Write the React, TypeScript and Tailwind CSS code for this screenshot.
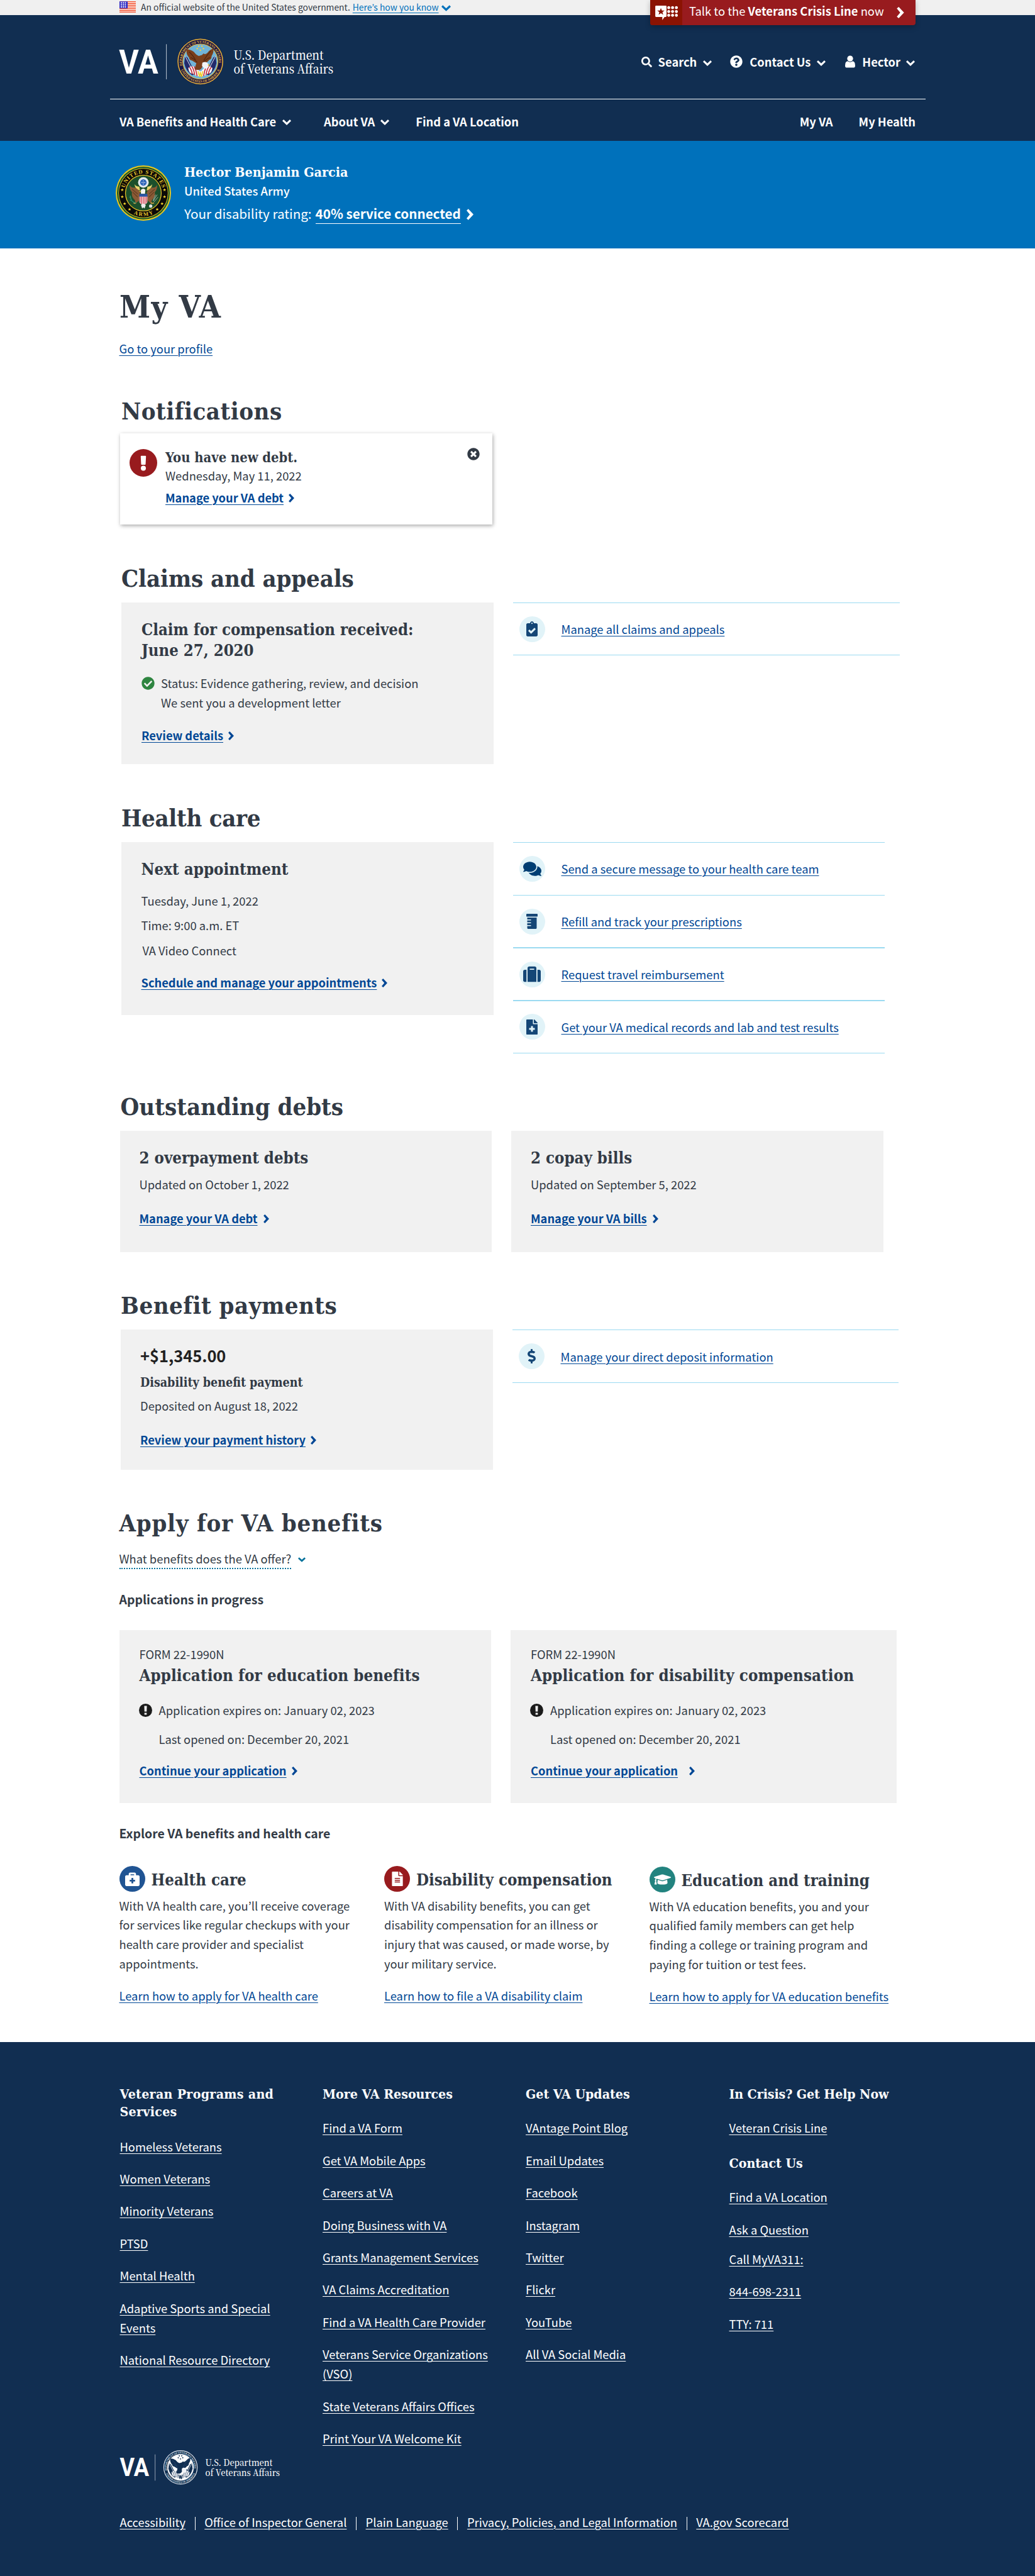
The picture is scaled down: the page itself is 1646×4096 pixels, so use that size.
import type { ReactNode } from "react";
import {
  FaBriefcaseMedical,
  FaCheckCircle,
  FaClipboardCheck,
  FaComments,
  FaDollarSign,
  FaFileAlt,
  FaFileMedical,
  FaGraduationCap,
  FaPrescriptionBottle,
  FaQuestionCircle,
  FaSearch,
  FaSuitcase,
  FaTimesCircle,
} from "react-icons/fa";

const SERIF = "font-['DejaVu_Serif_Condensed','DejaVu_Serif',serif] font-bold";
const LINK = "underline decoration-1 underline-offset-[3px]";

function ChevronRight({ className }: { className?: string }) {
  return (
    <svg viewBox="0 0 14 22" className={className} fill="currentColor" aria-hidden="true">
      <polygon points="3.6,0 14,11 3.6,22 0,18.8 6.6,11 0,3.2" />
    </svg>
  );
}

function ChevronDown({ className }: { className?: string }) {
  return (
    <svg viewBox="0 0 22 14" className={className} fill="currentColor" aria-hidden="true">
      <polygon points="0,3.6 11,14 22,3.6 18.8,0 11,7.2 3.2,0" />
    </svg>
  );
}

function Flag() {
  return (
    <svg viewBox="0 0 40 27" className="h-[18px] w-[26px]" aria-hidden="true">
      <rect width="40" height="27" fill="#fff" />
      {[0, 4.2, 8.4, 12.6, 16.8, 21, 25].map((y) => (
        <rect key={y} y={y} width="40" height="2" fill="#f0350c" />
      ))}
      <rect width="20" height="17" fill="#2f2bc4" />
      {[3, 8, 13].map((y) =>
        [3, 8, 13].map((x) => <rect key={`${x}-${y}`} x={x} y={y - 1} width="3" height="3" fill="#fff" />),
      )}
    </svg>
  );
}

function VaSeal({ mono = false }: { mono?: boolean }) {
  const ring = mono ? "#112e51" : "#1b1746";
  const gold = mono ? "#dfe5ec" : "#e3b43a";
  const sky = mono ? "#ffffff" : "#71b4d8";
  const wing = mono ? "#112e51" : "#7a3f1c";
  const wingDark = mono ? "#27456b" : "#4d2411";
  const canton = mono ? "#112e51" : "#232a6b";
  const red = mono ? "#6f829b" : "#c8202f";
  const id = mono ? "mono" : "color";
  return (
    <g>
      <circle cx="58" cy="60" r="57.5" fill={ring} />
      <circle cx="58" cy="60" r="55.5" fill="none" stroke={gold} strokeWidth="2.4" />
      <circle cx="58" cy="60" r="43.5" fill={sky} stroke={gold} strokeWidth="1.8" />
      <path id={`seal-top-${id}`} d="M 14.2 73 A 45.8 45.8 0 1 1 101.8 73" fill="none" />
      <path id={`seal-bottom-${id}`} d="M 7.5 74 A 52.5 52.5 0 0 0 108.5 74" fill="none" />
      <g fill={gold} fontSize="8.6" fontWeight="700" fontFamily="'Liberation Serif', serif">
        <text>
          <textPath href={`#seal-top-${id}`} startOffset="3" textLength="158" lengthAdjust="spacing">
            DEPARTMENT OF VETERANS AFFAIRS
          </textPath>
        </text>
        <text>
          <textPath href={`#seal-bottom-${id}`} startOffset="7" textLength="122" lengthAdjust="spacing">
            UNITED STATES OF AMERICA
          </textPath>
        </text>
      </g>
      <g fill={mono ? "#112e51" : "#f3cf46"}>
        <circle cx="54" cy="22" r="2" />
        <circle cx="62" cy="22" r="2" />
        <circle cx="50.5" cy="28" r="2" />
        <circle cx="65.5" cy="28" r="2" />
        <circle cx="58" cy="32" r="2" />
      </g>
      <path d="M20 46 L26 50 L46 90 L38 94 Q22 84 18 64 Z" fill={canton} />
      <path d="M96 46 L90 50 L70 90 L78 94 Q94 84 98 64 Z" fill={canton} />
      <path d="M20 46 L44 92" stroke={mono ? "#fff" : "#dfe6ee"} strokeWidth="1.6" />
      <path d="M96 46 L72 92" stroke={mono ? "#fff" : "#dfe6ee"} strokeWidth="1.6" />
      <path d="M28 76 Q40 64 56 84 L60 84 Q76 64 88 76 Q86 92 76 90 Q68 98 58 96 Q48 98 40 90 Q30 92 28 76 Z" fill="#f4f4f6" />
      <g stroke={red} strokeWidth="2.4" fill="none">
        <path d="M31 74 Q36 80 38 91" />
        <path d="M37 72 Q42 80 44 93" />
        <path d="M43 72 Q48 82 50 96" />
        <path d="M85 74 Q80 80 78 91" />
        <path d="M79 72 Q74 80 72 93" />
        <path d="M73 72 Q68 82 66 96" />
      </g>
      <path
        d="M24 30 Q22 42 30 50 Q30 56 38 58 Q44 62 48 64 L44 78 Q52 84 60 78 L68 64 Q76 62 80 56 Q86 54 86 46 Q92 38 90 28 Q82 30 76 38 Q70 44 66 40 L62 44 L54 46 Q48 44 42 36 Q34 30 24 30 Z"
        fill={wing}
      />
      <path d="M30 36 Q38 42 46 56 M34 50 Q42 52 50 62 M84 34 Q74 44 66 58 M82 50 Q74 52 64 64" stroke={wingDark} strokeWidth="1.8" fill="none" />
      <path d="M63 63 Q72 58 78 66 Q80 76 72 78 Q64 76 62 70 Z" fill="#f2f4f8" />
      <path d="M77 66 L82 69 L77 71 Z" fill={mono ? "#112e51" : "#f0b929"} />
      <path d="M52 84 L56 98 L58 86 L61 99 L64 84" stroke={mono ? "#112e51" : "#f3cf2e"} strokeWidth="2.6" fill="none" />
    </g>
  );
}

/** Wordmark, seal and department name; drawn on a 530 x 120 grid. */
function VaLogo({ mono = false, className }: { mono?: boolean; className?: string }) {
  return (
    <svg viewBox="0 0 530 120" className={`overflow-visible ${className}`} role="img" aria-label="U.S. Department of Veterans Affairs">
      <text x="-1" y="88.5" fill="#fff" fontFamily="Roboto, 'Liberation Sans', sans-serif" fontWeight="700" fontSize="83" textLength="97" lengthAdjust="spacingAndGlyphs">
        VA
      </text>
      <rect x="115.5" y="16" width="1.6" height="87" fill="#b9c3cf" />
      <g transform="translate(142.5 -1)">
        <VaSeal mono={mono} />
      </g>
      <g fill="#fff" fontFamily="'Noto Serif CJK SC', 'Liberation Serif', serif" fontWeight="500" fontSize="31">
        <text x="283" y="55" textLength="223" lengthAdjust="spacingAndGlyphs">
          U.S. Department
        </text>
        <text x="283" y="88.5" textLength="247" lengthAdjust="spacingAndGlyphs">
          of Veterans Affairs
        </text>
      </g>
    </svg>
  );
}

const STAR = "0,-4 1.1,-1.3 4,-1.2 1.7,0.5 2.5,3.3 0,1.7 -2.5,3.3 -1.7,0.5 -4,-1.2 -1.1,-1.3";

function ArmySeal() {
  return (
    <svg viewBox="0 0 136 136" className="h-[88px] w-[88px]" role="img" aria-label="United States Army seal">
      <circle cx="68" cy="68" r="68" fill="#e9c81f" />
      <circle cx="68" cy="68" r="65" fill="#1d5a2c" />
      <circle cx="68" cy="68" r="61.5" fill="#d8b91f" />
      <circle cx="68" cy="68" r="60" fill="#0b0a08" />
      <circle cx="68" cy="68" r="45" fill="#e2bd28" />
      <circle cx="68" cy="68" r="43" fill="#1c4f2b" />
      <path id="army-top" d="M 22.5 68 A 45.5 45.5 0 0 1 113.5 68" fill="none" />
      <path id="army-bottom" d="M 11.5 68 A 56.5 56.5 0 0 0 124.5 68" fill="none" />
      <g fill="#e6c32a" fontFamily="'Liberation Serif', serif" fontWeight="700" fontSize="13.5">
        <text dy="-2.5">
          <textPath href="#army-top" startOffset="12" textLength="119" lengthAdjust="spacing">
            UNITED STATES
          </textPath>
        </text>
        <text>
          <textPath href="#army-bottom" startOffset="64" textLength="50" lengthAdjust="spacing">
            ARMY
          </textPath>
        </text>
      </g>
      <g fill="#f1cf2b">
        {[
          [16, 60],
          [16, 77],
          [22, 94],
          [34, 108],
          [120, 60],
          [120, 77],
          [114, 94],
          [102, 108],
        ].map(([x, y]) => (
          <polygon key={`${x}-${y}`} points={STAR} transform={`translate(${x} ${y})`} />
        ))}
      </g>
      <path d="M46 46 Q48 60 60 62 L58 52 Q50 52 46 46 Z M90 46 Q88 60 76 62 L78 52 Q86 52 90 46 Z" fill="#e8d36a" />
      <path d="M34 48 Q38 56 46 54 Q56 58 60 66 L58 86 L46 96 Q50 88 46 84 Q38 76 40 66 Q34 60 34 48 Z" fill="#8a5a35" />
      <path d="M102 48 Q98 56 90 54 Q80 58 76 66 L78 86 L90 96 Q86 88 90 84 Q98 76 96 66 Q102 60 102 48 Z" fill="#8a5a35" />
      <path d="M40 58 L54 70 M42 66 L54 78 M96 58 L82 70 M94 66 L82 78" stroke="#5e3a1f" strokeWidth="1.6" />
      <circle cx="68" cy="42" r="13" fill="#f3f4f6" />
      <circle cx="68" cy="42" r="8" fill="#2b62b8" />
      <circle cx="68" cy="42" r="10.4" fill="none" stroke="#b9c6da" strokeWidth="1" />
      <g fill="#fff">
        <circle cx="68" cy="38" r="1.1" />
        <circle cx="64.5" cy="42" r="1.1" />
        <circle cx="68" cy="42" r="1.1" />
        <circle cx="71.5" cy="42" r="1.1" />
        <circle cx="68" cy="46" r="1.1" />
      </g>
      <path d="M62 60 Q68 54 73 60 L72 70 L62 70 Z" fill="#f6f6f2" />
      <path d="M61 62 L57 64 L62 66 Z" fill="#eec22c" />
      <rect x="58" y="70" width="20" height="8" fill="#2a55a5" />
      <path d="M58 77 H78 V90 Q76 95 68 97 Q60 95 58 90 Z" fill="#f5f3f3" />
      <path d="M60 77 V92 M64 77 V95 M68 77 V97 M72 77 V95 M76 77 V92" stroke="#cf2336" strokeWidth="1.8" />
      <path d="M50 92 Q46 94 44 92 M86 92 Q92 94 94 92" stroke="#d9b04a" strokeWidth="2.4" />
      <path d="M62 97 L68 94 L74 97 L71 106 L68 103 L65 106 Z" fill="#eceeee" />
      <path d="M36 74 Q36 90 50 92 M38 80 l-4 -2 M40 86 l-5 0" stroke="#2f8a6a" strokeWidth="2.2" fill="none" />
      <path d="M102 72 L92 88 M98 72 L92 86 M104 78 L94 90" stroke="#c2ccc9" strokeWidth="1.2" />
      <circle cx="86" cy="100" r="4" fill="#dfe3e4" />
    </svg>
  );
}

function CrisisIcon() {
  return (
    <svg viewBox="0 0 56 36" className="h-[23px] w-[36px]" aria-hidden="true">
      <path d="M2 0 H26 Q28 0 28 2 V26 Q28 28 26 28 H23 L17.5 36 V28 H2 Q0 28 0 26 V2 Q0 0 2 0 Z" fill="#fff" />
      <polygon points={STAR} transform="translate(14 15) scale(2.3)" fill="#8b1303" />
      {[5, 14.5, 24].map((y) =>
        [33.5, 43, 52.5].map((x) => <circle key={`${x}-${y}`} cx={x} cy={y} r="3.7" fill="#fff" />),
      )}
    </svg>
  );
}

function PersonIcon() {
  return (
    <svg viewBox="0 0 25 30" className="h-[20px] w-[16px]" fill="#fff" aria-hidden="true">
      <ellipse cx="12.5" cy="7.4" rx="7.2" ry="7.4" />
      <path d="M6 14 Q12.5 18.5 19 14 Q25 15 25 25 Q25 30 20 30 H5 Q0 30 0 25 Q0 15 6 14 Z" />
    </svg>
  );
}

function AlertIcon() {
  return (
    <svg viewBox="0 0 68 68" className="h-[44px] w-[44px] shrink-0" aria-hidden="true">
      <circle cx="34" cy="34" r="34" fill="#981b1e" />
      <path d="M27.5 18 Q27.5 16.5 29 16.5 H39 Q40.5 16.5 40.5 18 L39.5 37 Q39.5 38.5 38 38.5 H30 Q28.5 38.5 28.5 37 Z" fill="#fff" />
      <circle cx="34" cy="47" r="6.2" fill="#fff" />
    </svg>
  );
}

function ExpiresIcon() {
  return (
    <svg viewBox="0 0 32 32" className="mt-[6px] h-[21px] w-[21px] shrink-0" aria-hidden="true">
      <circle cx="16" cy="16" r="16" fill="#1b1b1b" />
      <path d="M12.8 5.5 H19.2 L18.7 19 H13.3 Z M13.2 22 H18.8 V26.5 H13.2 Z" fill="#f1f1f1" />
    </svg>
  );
}

function ActionLink({ children, gap = "gap-[8px]" }: { children: ReactNode; gap?: string }) {
  return (
    <a className={`flex items-center ${gap} text-[18.3px] leading-[32px] font-bold text-[#004795]`}>
      <span className={LINK}>{children}</span>
      <ChevronRight className="mt-[2px] h-[14px] w-[9px]" />
    </a>
  );
}

function TopBanner() {
  return (
    <div className="flex h-[24px] bg-[#f0f0f0] pl-[190px] text-[13.87px] leading-[22px]">
      <div className="pt-[2px]">
        <Flag />
      </div>
      <span className="ml-[8px]">An official website of the United States government.</span>
      <a className={`${LINK} ml-[4px] text-[#0071bb]`}>Here’s how you know</a>
      <ChevronDown className="mt-[8px] ml-[4px] h-[10px] w-[15px] text-[#0071bb]" />
    </div>
  );
}

function CrisisLine() {
  return (
    <div className="absolute top-0 left-[1034px] flex h-[40px] w-[422px] overflow-hidden rounded-b-[4px] bg-[#981b1e] text-[18.36px] leading-[32px] text-white shadow-[0_3px_8px_rgba(0,0,0,0.25)]">
      <div className="flex w-[51px] justify-center bg-[#8b1303] pt-[9px]">
        <CrisisIcon />
      </div>
      <span className="mt-px ml-[11px] whitespace-pre">
        Talk to the <b>Veterans Crisis Line</b> now
      </span>
      <ChevronRight className="mt-[11px] mr-[18px] ml-auto h-[18px] w-[12px]" />
    </div>
  );
}

function Header() {
  return (
    <header className="h-[200px] bg-[#112e51] text-[18.3px] leading-[32px] font-bold text-white">
      <div className="ml-[175px] w-[1297px] px-[15px]">
        <div className="flex h-[133px] justify-between">
          <VaLogo className="mt-[36px] h-[77px] w-[340px]" />
          <div className="mt-[58px] flex h-[32px] items-center">
            <FaSearch className="h-[17px] w-[17px]" />
            <span className="ml-[10px]">Search</span>
            <ChevronDown className="mt-[4px] ml-[10px] h-[9px] w-[14px]" />
            <FaQuestionCircle className="ml-[29px] h-[20px] w-[20px]" />
            <span className="ml-[11px]">Contact Us</span>
            <ChevronDown className="mt-[4px] ml-[10px] h-[9px] w-[14px]" />
            <span className="ml-[31px]">
              <PersonIcon />
            </span>
            <span className="ml-[11px]">Hector</span>
            <ChevronDown className="mt-[4px] mr-[2px] ml-[9px] h-[9px] w-[14px]" />
          </div>
        </div>
        <div className="-mx-[15px] h-px bg-white" />
        <nav className="mt-[19px] flex items-center">
          <span>VA Benefits and Health Care</span>
          <ChevronDown className="mt-[3px] ml-[10px] h-[9px] w-[14px]" />
          <span className="ml-[52px]">About VA</span>
          <ChevronDown className="mt-[3px] ml-[9px] h-[9px] w-[14px]" />
          <span className="ml-[42px]">Find a VA Location</span>
          <span className="ml-auto">My VA</span>
          <span className="mr-px ml-[41px]">My Health</span>
        </nav>
      </div>
    </header>
  );
}

function Profile() {
  return (
    <section className="flex h-[171px] bg-[#0071bb] pl-[184px] text-white">
      <div className="mt-[39px]">
        <ArmySeal />
      </div>
      <div className="mt-[36px] ml-[21px]">
        <div className={`${SERIF} text-[21.3px] leading-[28px]`}>Hector Benjamin Garcia</div>
        <div className="text-[18.4px] leading-[30px] font-medium">United States Army</div>
        <div className="mt-[6px] flex items-start text-[20.63px] leading-[31px]">
          <span>Your disability rating:</span>
          <b className="ml-[6px] border-b-[1.5px] border-white">40% service connected</b>
          <ChevronRight className="mt-[8px] ml-[9px] h-[18px] w-[11px]" />
        </div>
      </div>
    </section>
  );
}

function QuickLinks({ className, rowHeight = "h-[83.4px]", items }: {
  className: string;
  rowHeight?: string;
  items: { icon: ReactNode; label: string }[];
}) {
  return (
    <ul className={`${className} border-b border-[#9bdaf1] [&>li:nth-child(n+3)]:border-t-2`}>
      {items.map(({ icon, label }) => (
        <li key={label} className={`${rowHeight} flex items-center border-t border-[#9bdaf1] pl-[10px]`}>
          <span className="flex h-[41px] w-[41px] items-center justify-center rounded-full bg-[#e1f3f8] text-[#144676]">
            {icon}
          </span>
          <a className={`${LINK} ml-[26px] text-[18.38px] leading-[32px] text-[#004795]`}>{label}</a>
        </li>
      ))}
    </ul>
  );
}

function Notifications() {
  return (
    <section className="ml-[191px]">
      <h2 className={`${SERIF} mt-[60px] ml-[2px] text-[38px] leading-[48px] tracking-[0.5px]`}>Notifications</h2>
      <div className="mt-[11px] flex h-[145px] w-[592px] bg-white pt-[25px] pr-[20px] pl-[15px] shadow-[1px_2px_6px_rgba(0,0,0,0.35)]">
        <AlertIcon />
        <div className="ml-[13px] grow">
          <h3 className={`${SERIF} text-[21.8px] leading-[28px]`}>You have new debt.</h3>
          <p className="leading-[28px]">Wednesday, May 11, 2022</p>
          <div className="mt-[5px]">
            <ActionLink>Manage your VA debt</ActionLink>
          </div>
        </div>
        <FaTimesCircle className="-mt-[2px] h-[20px] w-[20px]" />
      </div>
    </section>
  );
}

function Claims() {
  return (
    <section className="ml-[193px]">
      <h2 className={`${SERIF} mt-[62px] text-[38px] leading-[48px] tracking-[-0.1px]`}>Claims and appeals</h2>
      <div className="mt-[14px] flex gap-[31px]">
        <div className="h-[257px] w-[591.5px] bg-[#f1f1f1] pt-[27px] pl-[32px]">
          <h3 className={`${SERIF} text-[25.5px] leading-[33px]`}>
            Claim for compensation received:
            <br />
            June 27, 2020
          </h3>
          <div className="mt-[20px] flex gap-[10px] leading-[31px]">
            <FaCheckCircle className="mt-[5px] h-[21px] w-[21px] text-[#2e8540]" />
            <p>
              Status: Evidence gathering, review, and decision
              <br />
              We sent you a development letter
            </p>
          </div>
          <div className="mt-[20px]">
            <ActionLink>Review details</ActionLink>
          </div>
        </div>
        <QuickLinks
          className="w-[615px] self-start"
          items={[{ icon: <FaClipboardCheck className="h-[24px] w-[18px]" />, label: "Manage all claims and appeals" }]}
        />
      </div>
    </section>
  );
}

function HealthCare() {
  return (
    <section className="ml-[193px]">
      <h2 className={`${SERIF} mt-[62px] text-[38px] leading-[48px] tracking-[-0.3px]`}>Health care</h2>
      <div className="mt-[14px] flex items-start gap-[31px]">
        <div className="h-[275px] w-[591.5px] bg-[#f1f1f1] pt-[26px] pl-[31.5px]">
          <h3 className={`${SERIF} text-[25.7px] leading-[34px]`}>Next appointment</h3>
          <p className="mt-[17px] leading-[32px]">Tuesday, June 1, 2022</p>
          <p className="mt-[7px] leading-[32px]">Time: 9:00 a.m. ET</p>
          <p className="mt-[8px] ml-[2px] leading-[32px]">VA Video Connect</p>
          <div className="mt-[19px]">
            <ActionLink>Schedule and manage your appointments</ActionLink>
          </div>
        </div>
        <QuickLinks
          className="w-[591.5px]"
          rowHeight="h-[83.7px]"
          items={[
            { icon: <FaComments className="h-[29px] w-[29px] text-[#003e73]" />, label: "Send a secure message to your health care team" },
            { icon: <FaPrescriptionBottle className="h-[24px] w-[18px]" />, label: "Refill and track your prescriptions" },
            { icon: <FaSuitcase className="h-[28px] w-[28px]" />, label: "Request travel reimbursement" },
            { icon: <FaFileMedical className="h-[24px] w-[18px]" />, label: "Get your VA medical records and lab and test results" },
          ]}
        />
      </div>
    </section>
  );
}

function DebtCard({ title, updated, action }: { title: string; updated: string; action: string }) {
  return (
    <div className="h-[193px] w-[591.5px] bg-[#f1f1f1] pt-[26.4px] pl-[31px]">
      <h3 className={`${SERIF} text-[25.6px] leading-[34px]`}>{title}</h3>
      <p className="mt-[8.6px] leading-[32px]">{updated}</p>
      <div className="mt-[22px]">
        <ActionLink gap="gap-[9px]">{action}</ActionLink>
      </div>
    </div>
  );
}

function Debts() {
  return (
    <section className="ml-[190.5px]">
      <h2 className={`${SERIF} mt-[61px] ml-px text-[38px] leading-[48px]`}>Outstanding debts</h2>
      <div className="mt-[14px] flex gap-[31px]">
        <DebtCard title="2 overpayment debts" updated="Updated on October 1, 2022" action="Manage your VA debt" />
        <DebtCard title="2 copay bills" updated="Updated on September 5, 2022" action="Manage your VA bills" />
      </div>
    </section>
  );
}

function Payments() {
  return (
    <section className="ml-[192px]">
      <h2 className={`${SERIF} mt-[61.7px] text-[38px] leading-[48px] tracking-[0.5px]`}>Benefit payments</h2>
      <div className="mt-[14px] flex gap-[31px]">
        <div className="h-[222.5px] w-[591.5px] bg-[#f1f1f1] pt-[24px] pl-[31px]">
          <div className="text-[25.4px] leading-[34px] font-bold text-[#212121]">+$1,345.00</div>
          <h3 className={`${SERIF} mt-[12.5px] text-[19.5px] leading-[28px]`}>Disability benefit payment</h3>
          <p className="mt-[6.5px] leading-[32px]">Deposited on August 18, 2022</p>
          <div className="mt-[22px]">
            <ActionLink>Review your payment history</ActionLink>
          </div>
        </div>
        <QuickLinks
          className="w-[614px] self-start"
          items={[{ icon: <FaDollarSign className="h-[23px] w-[23px]" />, label: "Manage your direct deposit information" }]}
        />
      </div>
    </section>
  );
}

function ApplicationCard({ title, width, gap }: { title: string; width: string; gap: string }) {
  return (
    <div className={`${width} h-[275px] bg-[#f1f1f1] pt-[22px] pl-[32px]`}>
      <p className="leading-[32px]">FORM 22-1990N</p>
      <h3 className={`${SERIF} mt-px text-[25.7px] leading-[34px] tracking-[0.08px]`}>{title}</h3>
      <div className="mt-[22px] -ml-px flex gap-[11px]">
        <ExpiresIcon />
        <div>
          <p className="leading-[32px]">Application expires on: January 02, 2023</p>
          <p className="mt-[14px] leading-[32px]">Last opened on: December 20, 2021</p>
        </div>
      </div>
      <div className="mt-[18px]">
        <ActionLink gap={gap}>Continue your application</ActionLink>
      </div>
    </div>
  );
}

function Benefit({ icon, color, title, lines, link, className }: {
  icon: ReactNode;
  color: string;
  title: string;
  lines: string[];
  link: string;
  className?: string;
}) {
  return (
    <div className={className}>
      <div className="flex items-center">
        <span className={`flex h-[41px] w-[41px] items-center justify-center rounded-full text-white ${color}`}>{icon}</span>
        <h4 className={`${SERIF} mt-[2px] ml-[10px] text-[25.6px] leading-[34px]`}>{title}</h4>
      </div>
      <p className="mt-[6.3px] leading-[30.87px]">
        {lines.map((line) => (
          <span key={line} className="block">
            {line}
          </span>
        ))}
      </p>
      <a className={`${LINK} mt-[18.7px] block leading-[32px] text-[#004795]`}>{link}</a>
    </div>
  );
}

function Apply() {
  return (
    <section className="ml-[189.5px]">
      <h2 className={`${SERIF} mt-[61px] text-[38px] leading-[48px] tracking-[0.75px]`}>Apply for VA benefits</h2>
      <div className="mt-[17.5px] flex">
        <span className="border-b-2 border-dotted border-[#00719b] leading-[30px]">What benefits does the VA offer?</span>
        <ChevronDown className="mt-[13px] ml-[11px] h-[8px] w-[12px] text-[#00719b]" />
      </div>
      <h3 className="mt-[31.5px] text-[19.45px] leading-[32px] font-bold">Applications in progress</h3>
      <div className="mt-[33px] flex gap-[31px]">
        <ApplicationCard title="Application for education benefits" width="w-[591.5px]" gap="gap-[8px]" />
        <ApplicationCard title="Application for disability compensation" width="w-[614px]" gap="gap-[18px]" />
      </div>
      <h3 className="mt-[32px] text-[19.45px] leading-[32px] font-bold">Explore VA benefits and health care</h3>
      <div className="mt-[36.3px] grid grid-cols-[421.5px_421.5px_400px]">
        <Benefit
          icon={<FaBriefcaseMedical className="h-[23px] w-[23px]" />}
          color="bg-[#205493]"
          title="Health care"
          lines={[
            "With VA health care, you’ll receive coverage",
            "for services like regular checkups with your",
            "health care provider and specialist",
            "appointments.",
          ]}
          link="Learn how to apply for VA health care"
        />
        <Benefit
          icon={<FaFileAlt className="h-[23px] w-[18px]" />}
          color="bg-[#981b1e]"
          title="Disability compensation"
          lines={[
            "With VA disability benefits, you can get",
            "disability compensation for an illness or",
            "injury that was caused, or made worse, by",
            "your military service.",
          ]}
          link="Learn how to file a VA disability claim"
        />
        <Benefit
          className="mt-px"
          icon={<FaGraduationCap className="h-[27px] w-[27px]" />}
          color="bg-[#22837f]"
          title="Education and training"
          lines={[
            "With VA education benefits, you and your",
            "qualified family members can get help",
            "finding a college or training program and",
            "paying for tuition or test fees.",
          ]}
          link="Learn how to apply for VA education benefits"
        />
      </div>
    </section>
  );
}

const FOOTER_HEADING = `${SERIF} text-[21.2px] leading-[28.4px]`;

function FooterLinks({ items, className }: { items: ReactNode[]; className: string }) {
  return (
    <ul className={`flex flex-col gap-[20.6px] leading-[30.87px] ${className}`}>
      {items.map((item, i) => (
        <li key={i}>
          <a className={LINK}>{item}</a>
        </li>
      ))}
    </ul>
  );
}

function Footer() {
  const legal = [
    "Accessibility",
    "Office of Inspector General",
    "Plain Language",
    "Privacy, Policies, and Legal Information",
    "VA.gov Scorecard",
  ];
  return (
    <footer className="mt-[57px] h-[851px] bg-[#112e51] pt-[69px] pl-[190.5px] text-white">
      <div className="grid grid-cols-[322.5px_323px_323.5px_320px]">
        <div>
          <h3 className={`${FOOTER_HEADING} tracking-[0.3px]`}>
            Veteran Programs and
            <br />
            Services
          </h3>
          <FooterLinks
            className="mt-[25px]"
            items={[
              "Homeless Veterans",
              "Women Veterans",
              "Minority Veterans",
              "PTSD",
              "Mental Health",
              <>
                Adaptive Sports and Special
                <br />
                Events
              </>,
              "National Resource Directory",
            ]}
          />
        </div>
        <div>
          <h3 className={FOOTER_HEADING}>More VA Resources</h3>
          <FooterLinks
            className="mt-[24px]"
            items={[
              "Find a VA Form",
              "Get VA Mobile Apps",
              "Careers at VA",
              "Doing Business with VA",
              "Grants Management Services",
              "VA Claims Accreditation",
              "Find a VA Health Care Provider",
              <>
                Veterans Service Organizations
                <br />
                (VSO)
              </>,
              "State Veterans Affairs Offices",
              "Print Your VA Welcome Kit",
            ]}
          />
        </div>
        <div>
          <h3 className={FOOTER_HEADING}>Get VA Updates</h3>
          <FooterLinks
            className="mt-[24px]"
            items={[
              "VAntage Point Blog",
              "Email Updates",
              "Facebook",
              "Instagram",
              "Twitter",
              "Flickr",
              "YouTube",
              "All VA Social Media",
            ]}
          />
        </div>
        <div>
          <h3 className={`${FOOTER_HEADING} tracking-[-0.1px]`}>In Crisis? Get Help Now</h3>
          <FooterLinks className="mt-[24px]" items={["Veteran Crisis Line"]} />
          <h3 className={`${FOOTER_HEADING} mt-[27px]`}>Contact Us</h3>
          <FooterLinks className="mt-[24px]" items={["Find a VA Location", "Ask a Question"]} />
          <FooterLinks className="mt-[16px]" items={["Call MyVA311:", "844-698-2311", "TTY: 711"]} />
        </div>
      </div>
      <VaLogo mono className="mt-[2px] h-[57.5px] w-[254px]" />
      <div className="mt-[41px] flex items-center leading-[32px]">
        {legal.map((label, i) => (
          <span key={label} className="flex items-center">
            {i > 0 && <span className="mx-[14.6px] mt-[5px] h-[21px] w-px bg-white" />}
            <a className={LINK}>{label}</a>
          </span>
        ))}
      </div>
    </footer>
  );
}

export default function App() {
  return (
    <div className="relative w-full overflow-hidden bg-white font-['Noto_Sans_CJK_KR','Noto_Sans',sans-serif] text-[18.36px] text-[#323a45]">
      <TopBanner />
      <CrisisLine />
      <Header />
      <Profile />
      <main>
        <h1 className={`${SERIF} mt-[63px] ml-[190px] text-[49.3px] leading-[60px] tracking-[1.4px]`}>My VA</h1>
        <div className="mt-[20px] ml-[189.5px] leading-[32px]">
          <a className={`${LINK} text-[#004795]`}>Go to your profile</a>
        </div>
        <Notifications />
        <Claims />
        <HealthCare />
        <Debts />
        <Payments />
        <Apply />
      </main>
      <Footer />
    </div>
  );
}
